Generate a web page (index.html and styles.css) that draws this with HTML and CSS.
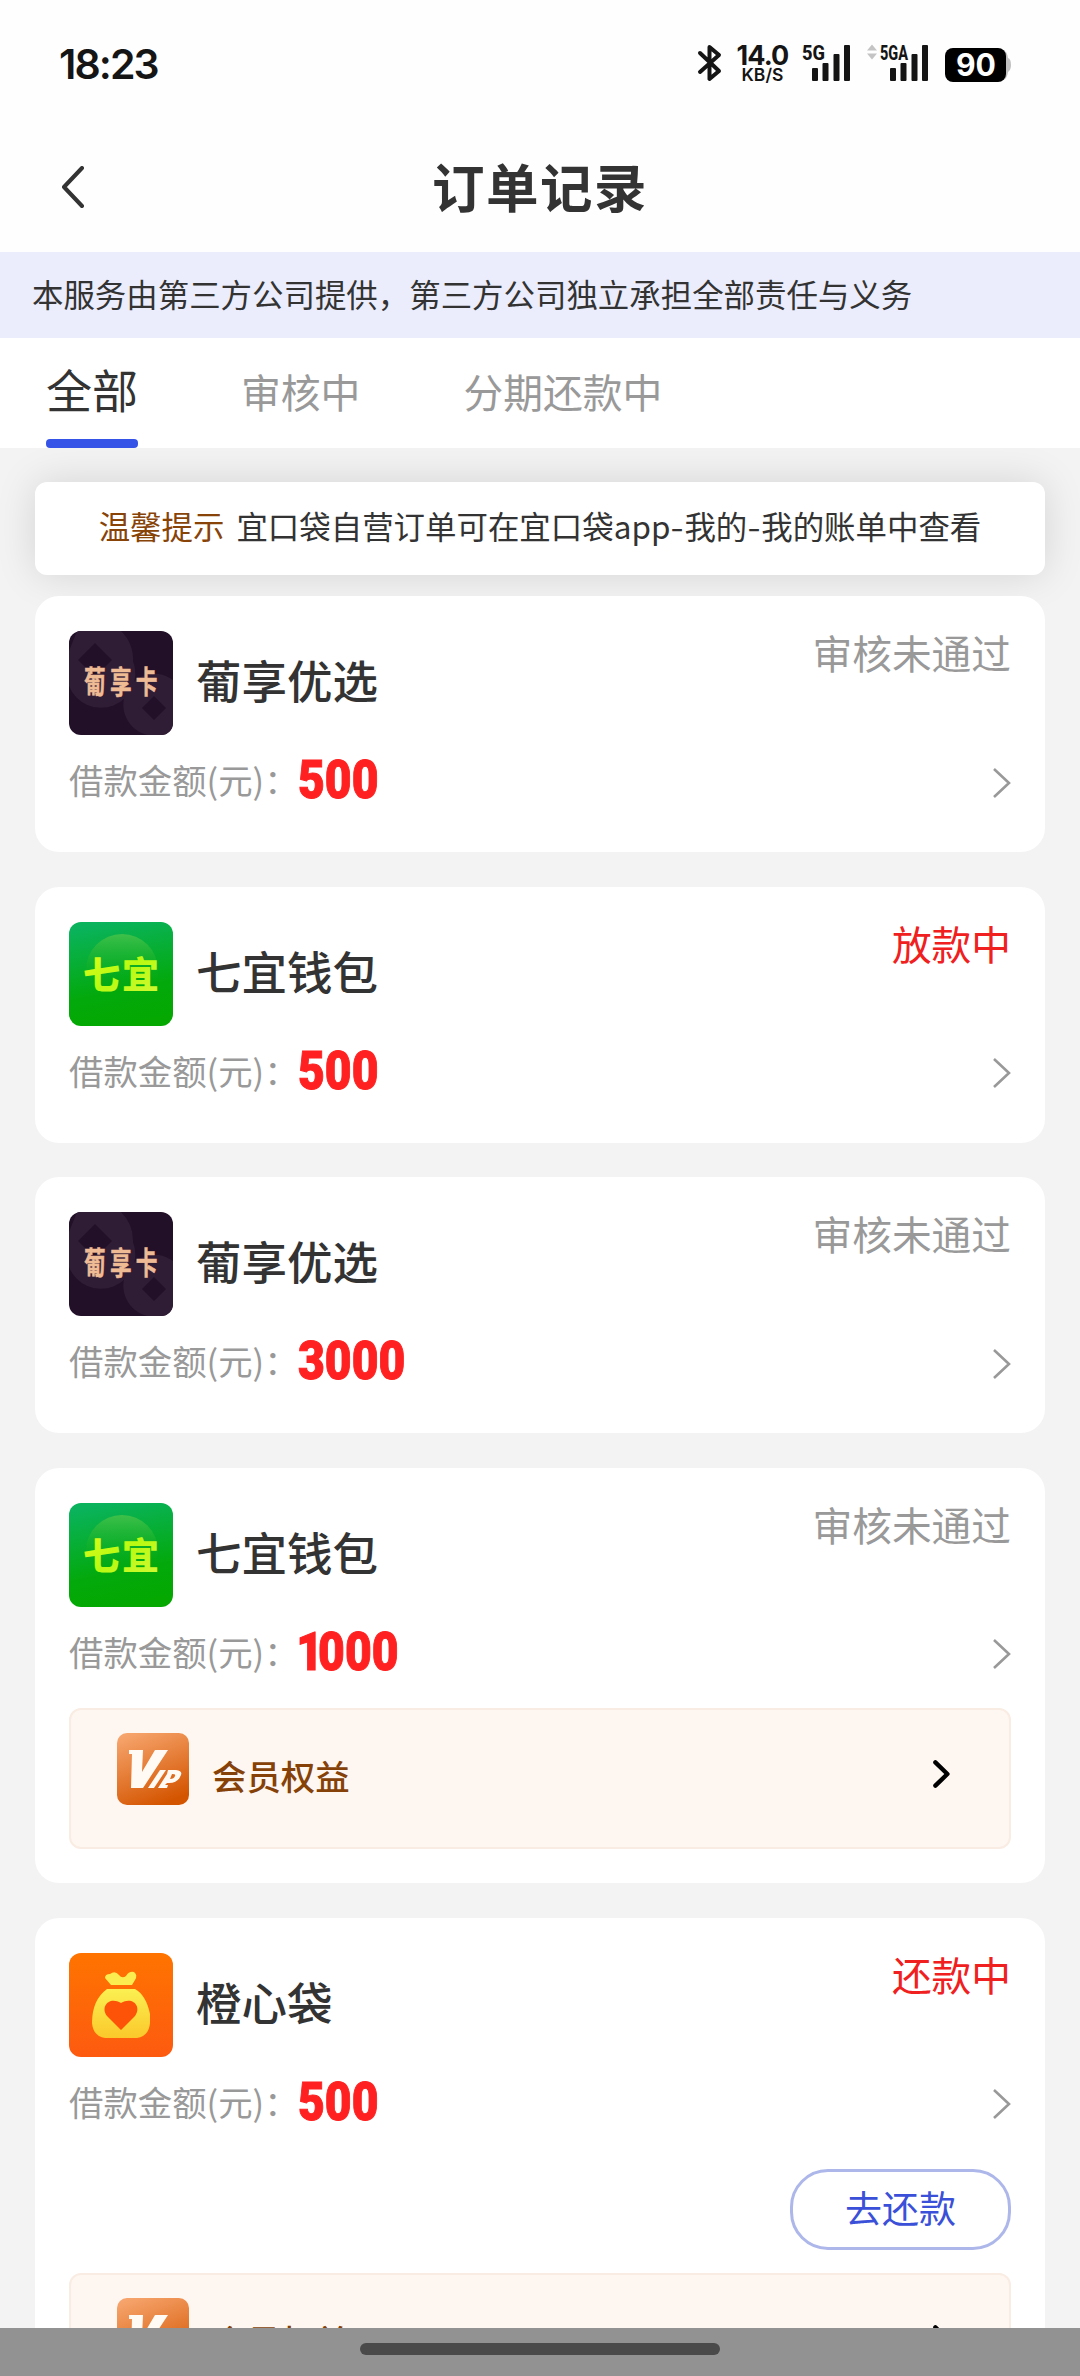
FILE: index.html
```html
<!DOCTYPE html>
<html lang="zh-CN">
<head>
<meta charset="utf-8">
<title>订单记录</title>
<link rel="stylesheet" href="styles.css">
</head>
<body>
<svg class="defs" width="0" height="0" aria-hidden="true">
  <defs>
    <linearGradient id="green" x1="0.4" y1="0" x2="0.6" y2="1"><stop offset="0" stop-color="#0ab35c"/><stop offset="0.65" stop-color="#03a90c"/><stop offset="1" stop-color="#04a800"/></linearGradient>
    <linearGradient id="dome" x1="0" y1="0" x2="0" y2="1"><stop offset="0" stop-color="#3fc04a"/><stop offset="0.7" stop-color="#06aa10" stop-opacity="0"/></linearGradient>
    <linearGradient id="lime" x1="0" y1="0" x2="1" y2="1"><stop offset="0" stop-color="#e2fb1c"/><stop offset="0.5" stop-color="#b9fa12"/><stop offset="1" stop-color="#d5f83a"/></linearGradient>
    <linearGradient id="orange" x1="0" y1="0" x2="0" y2="1"><stop offset="0" stop-color="#ff7400"/><stop offset="1" stop-color="#fd5a10"/></linearGradient>
    <linearGradient id="gold" x1="0" y1="0" x2="0" y2="1"><stop offset="0" stop-color="#fbf052"/><stop offset="1" stop-color="#fbc82a"/></linearGradient>
    <linearGradient id="vipbg" x1="0.2" y1="0" x2="0.6" y2="1"><stop offset="0" stop-color="#f6a46c"/><stop offset="1" stop-color="#d45500"/></linearGradient>
  </defs>
  <symbol id="logo-pu" viewBox="0 0 104 104">
    <rect width="104" height="104" fill="#220f28"/>
    <path fill="#2f1c35" fill-rule="evenodd" d="M8 0H52A40 40 0 0 1 64 30A34 34 0 0 1 0 55V20ZM26 12L9 29L26 46L43 29Z"/>
    <path fill="#2f1c35" fill-rule="evenodd" d="M104 49A31 31 0 1 0 92 104H104ZM85 65L73 77L85 89L97 77Z"/>
  </symbol>
  <symbol id="logo-qi" viewBox="0 0 104 104">
    <rect width="104" height="104" fill="url(#green)"/>
    <circle cx="53" cy="48" r="36" fill="url(#dome)"/>
  </symbol>
  <symbol id="logo-bag" viewBox="0 0 104 104">
    <rect width="104" height="104" fill="url(#orange)"/>
    <path fill="#fbec50" d="M42 32L36 25Q36 21 41 21Q46 17 50 22Q53 26 57 23Q60 18 65 19Q69 22 66 27L63 32Z"/>
    <path fill="url(#gold)" d="M38 36H66Q77 42 81 61V70Q80 83 68 85H36Q24 83 23 70Q23 47 38 36Z"/>
    <path fill="#fd5308" d="M52 77L38 63C31 54 40 43 52 50C64 43 73 54 66 63Z"/>
  </symbol>
  <symbol id="vip" viewBox="0 0 72 72">
    <rect width="72" height="72" rx="10" fill="url(#vipbg)"/>
    <path fill="#fffaf4" d="M12 17H26L25 39L38 17H51L26 55H14L15 21H12Z"/>
    <path fill="#fffaf4" d="M43 37H49L37 55H31ZM51 37H59Q67 38 63 44Q60 50 52 50H50L48 52H51L50 55H41L50 41ZM55 41L53 46Q57 46 58 43Q59 41 55 41Z" fill-rule="evenodd"/>
  </symbol>
  <symbol id="more" viewBox="0 0 18 30"><path d="M1 1L16 15L1 29" fill="none" stroke="#999" stroke-width="2.6"/></symbol>
  <symbol id="go" viewBox="0 0 17 28"><path d="M2.4 2.4L14.4 14L2.4 25.6" fill="none" stroke="#000" stroke-width="4.4" stroke-linecap="round" stroke-linejoin="round"/></symbol>
  <symbol id="bars" viewBox="0 0 38 36"><path fill="#151515" d="M0 24q0-1 1-1h4q1 0 1 1v11q0 1-1 1h-4q-1 0-1-1zM10.500 19q0-1 1-1h4q1 0 1 1v16q0 1-1 1h-4q-1 0-1-1zM21.500 10q0-1 1-1h4q1 0 1 1v25q0 1-1 1h-4q-1 0-1-1zM32 1q0-1 1-1h4q1 0 1 1v34q0 1-1 1h-4q-1 0-1-1z"/></symbol>
</svg>

<div class="screen">
  <header class="status-bar">
    <span class="clock">18:23</span>
    <div class="indicators">
      <svg class="bt" width="24" height="38" viewBox="0 0 24 38"><path d="M2 9L21 27L11.500 35V3L21 11L2 28" fill="none" stroke="#151515" stroke-width="4" stroke-linejoin="round" stroke-linecap="round"/></svg>
      <div class="speed"><span class="rate">14.0</span><span class="unit">KB/S</span></div>
      <svg class="sig" width="49" height="38" viewBox="0 0 49 38"><text class="net" x="0" y="16" font-size="21" textLength="23" lengthAdjust="spacingAndGlyphs">5G</text><use href="#bars" x="10" y="1" width="38" height="36"/></svg>
      <svg class="sig" width="62" height="38" viewBox="0 0 62 38"><path fill="#c4c4c4" d="M0 6.500L5 0.500L10 6.500ZM0 9.500H10L5 15.500Z"/><text class="net" x="13" y="16" font-size="21" textLength="28" lengthAdjust="spacingAndGlyphs">5GA</text><use href="#bars" x="23" y="1" width="38" height="36"/></svg>
      <svg class="battery" width="67" height="34" viewBox="0 0 67 34"><path fill="#c0c0c0" d="M58 2Q62 3 63 10Q66 11 66 17Q66 22 63 24Q62 31 58 32Z"/><rect width="61" height="34" rx="8"/><text class="level" x="11" y="28" font-size="31" textLength="40" lengthAdjust="spacingAndGlyphs">90</text></svg>
    </div>
  </header>

  <nav class="title-bar">
    <svg class="back" width="24" height="42" viewBox="0 0 24 42"><path d="M21 2L3 21L21 40" fill="none" stroke="#333" stroke-width="4" stroke-linecap="round" stroke-linejoin="round"/></svg>
    <h1>订单记录</h1>
  </nav>

  <p class="notice">本服务由第三方公司提供，第三方公司独立承担全部责任与义务</p>

  <div class="tabs">
    <span class="tab active">全部</span>
    <span class="tab">审核中</span>
    <span class="tab">分期还款中</span>
  </div>

  <main class="list">
    <div class="tip"><span class="tip-label">温馨提示</span><span>宜口袋自营订单可在宜口袋app<i class="dash">-</i>我的<i class="dash">-</i>我的账单中查看</span></div>

    <section class="card">
      <div class="head"><svg class="logo" viewBox="0 0 104 104"><use href="#logo-pu"/><text class="pu" transform="translate(15 62) scale(0.7 1)">葡享卡</text></svg><h2>葡享优选</h2><span class="state">审核未通过</span></div>
      <div class="sum"><span class="label">借款金额(元)：</span><span class="amount">500</span><svg class="more"><use href="#more"/></svg></div>
    </section>

    <section class="card">
      <div class="head"><svg class="logo" viewBox="0 0 104 104"><use href="#logo-qi"/><text class="qi" x="14" y="67">七宜</text></svg><h2>七宜钱包</h2><span class="state hot">放款中</span></div>
      <div class="sum"><span class="label">借款金额(元)：</span><span class="amount">500</span><svg class="more"><use href="#more"/></svg></div>
    </section>

    <section class="card">
      <div class="head"><svg class="logo" viewBox="0 0 104 104"><use href="#logo-pu"/><text class="pu" transform="translate(15 62) scale(0.7 1)">葡享卡</text></svg><h2>葡享优选</h2><span class="state">审核未通过</span></div>
      <div class="sum"><span class="label">借款金额(元)：</span><span class="amount">3000</span><svg class="more"><use href="#more"/></svg></div>
    </section>

    <section class="card">
      <div class="head"><svg class="logo" viewBox="0 0 104 104"><use href="#logo-qi"/><text class="qi" x="14" y="67">七宜</text></svg><h2>七宜钱包</h2><span class="state">审核未通过</span></div>
      <div class="sum"><span class="label">借款金额(元)：</span><span class="amount"><span class="one">1</span>000</span><svg class="more"><use href="#more"/></svg></div>
      <div class="member"><svg class="vip"><use href="#vip"/></svg><span>会员权益</span><svg class="go"><use href="#go"/></svg></div>
    </section>

    <section class="card">
      <div class="head"><svg class="logo" viewBox="0 0 104 104"><use href="#logo-bag"/></svg><h2>橙心袋</h2><span class="state hot">还款中</span></div>
      <div class="sum"><span class="label">借款金额(元)：</span><span class="amount">500</span><svg class="more"><use href="#more"/></svg></div>
      <div class="actions"><span class="repay">去还款</span></div>
      <div class="member"><svg class="vip"><use href="#vip"/></svg><span>会员权益</span><svg class="go"><use href="#go"/></svg></div>
    </section>
  </main>

  <footer class="gesture"><span class="pill"></span></footer>
</div>
</body>
</html>
```

FILE: styles.css
```css
* { box-sizing: border-box; }
body {
  margin: 0;
  font-family: "Noto Sans CJK SC", sans-serif;
  color: #333;
}
h1, h2, p { margin: 0; }
svg { flex: none; display: block; }
.defs { position: absolute; }

.screen {
  width: 1080px;
  height: 2376px;
  display: flex;
  flex-direction: column;
  overflow: hidden;
  background: #f3f3f3;
}

.status-bar {
  flex: none;
  height: 126px;
  display: flex;
  justify-content: space-between;
  align-items: flex-start;
  padding: 44px 68px 0 59px;
  background: #fefefe;
}
.clock {
  font: 600 41px/41px Inter, sans-serif;
  letter-spacing: -1.9px;
  color: #151515;
}
.indicators { display: flex; align-items: flex-start; }
.indicators svg { overflow: visible; }
.bt { margin-right: 14px; }
.speed {
  width: 53px;
  display: flex;
  flex-direction: column;
  align-items: center;
  margin-right: 13px;
  color: #151515;
}
.rate { font: 700 27px/23px Inter, sans-serif; letter-spacing: -0.9px; white-space: nowrap; }
.unit { font: 600 17.500px/15px Inter, sans-serif; white-space: nowrap; }
.sig { margin-right: 16px; }
.net { font-family: Roboto, sans-serif; font-weight: 800; fill: #151515; }
.battery { margin-top: 4px; }
.level { font-family: Inter, sans-serif; font-weight: 700; fill: #fff; }

.title-bar {
  flex: none;
  height: 126px;
  display: grid;
  grid-template-columns: 85px 1fr 85px;
  align-items: center;
  background: #fefefe;
  padding-bottom: 5px;
}
.back { justify-self: end; }
h1 {
  text-align: center;
  font-size: 52.500px;
  font-weight: 700;
  letter-spacing: 1.500px;
  line-height: 70px;
  padding-bottom: 3px;
}

.notice {
  flex: none;
  height: 86px;
  padding-left: 32px;
  background: #ebedfc;
  font-size: 31.450px;
  line-height: 84px;
  white-space: nowrap;
}

.tabs {
  flex: none;
  height: 110px;
  display: flex;
  gap: 103px;
  padding-left: 46px;
  background: #fff;
}
.tab {
  font-size: 39.800px;
  line-height: 106px;
  color: #999;
}
.tab.active {
  position: relative;
  font-size: 46px;
  line-height: 100px;
  color: #333;
}
.tab.active::after {
  content: "";
  position: absolute;
  left: 0;
  right: 0;
  bottom: 0;
  height: 9px;
  border-radius: 4px;
  background: #3653e8;
}

.list {
  flex: 1;
  min-height: 0;
  overflow: hidden;
  display: flex;
  flex-direction: column;
  padding: 34px 35px 0;
}
.tip {
  flex: none;
  height: 93px;
  margin-bottom: 21px;
  display: flex;
  justify-content: center;
  gap: 12px;
  border-radius: 12px;
  background: #fff;
  box-shadow: 0 0 40px rgba(0, 0, 0, 0.13);
  font-size: 31.450px;
  line-height: 88px;
  white-space: nowrap;
}
.tip-label { color: #874308; }
.dash {
  display: inline-block;
  width: 14px;
  font-style: normal;
  text-align: center;
  transform: scaleX(1.2);
}

.card {
  flex: none;
  min-height: 256px;
  margin-bottom: 34.670px;
  padding: 35px 34px 30px;
  border-radius: 24px;
  background: #fff;
}
.head { display: flex; height: 104px; }
.logo { width: 104px; height: 104px; border-radius: 12px; }
.pu {
  font-family: "Noto Sans CJK SC", sans-serif;
  font-size: 31px;
  font-weight: 700;
  letter-spacing: 6px;
  fill: #eebb95;
  stroke: #eebb95;
  stroke-width: 0.5px;
}
.qi {
  font-family: "Noto Sans CJK SC", sans-serif;
  font-size: 37px;
  font-weight: 900;
  letter-spacing: 2px;
  fill: url(#lime);
}
h2 {
  flex: 1;
  margin-left: 23px;
  font-size: 45.500px;
  font-weight: 500;
  line-height: 96px;
}
.state {
  font-size: 39.700px;
  line-height: 42px;
  color: #999;
}
.state.hot { color: #f02020; }

.sum {
  display: flex;
  align-items: center;
  height: 82px;
  margin-top: 5px;
}
.label { width: 229px; padding-bottom: 4px; font-size: 34.400px; line-height: 50px; color: #999; white-space: nowrap; }
.amount {
  flex: 1;
  padding-bottom: 4px;
  font: 900 54.500px/60px Roboto, sans-serif;
  color: #ff2121;
  -webkit-text-stroke: 1px #ff2121;
  transform: scaleX(0.85);
  transform-origin: 0 50%;
}
.one { margin: 0 -6px 0 -2px; }
.more { width: 18px; height: 30px; margin-top: 3px; }

.member {
  display: flex;
  height: 141px;
  margin: 14px 0 4px;
  padding: 23px 59px 0 46px;
  border: 2px solid #f9ece3;
  border-radius: 12px;
  background: #fef7f1;
}
.vip { width: 72px; height: 72px; }
.member span {
  flex: 1;
  margin-left: 23px;
  font-size: 34.400px;
  font-weight: 500;
  line-height: 84px;
  color: #854108;
}
.go { width: 17px; height: 28px; margin-top: 27px; }

.actions { display: flex; justify-content: flex-end; height: 115px; padding-top: 25px; }
.repay {
  flex: none;
  width: 221px;
  height: 81px;
  border: 3px solid #adb7ea;
  border-radius: 38px;
  text-align: center;
  font-size: 37px;
  line-height: 71px;
  color: #3b50d8;
}

.gesture {
  flex: none;
  height: 48px;
  display: flex;
  justify-content: center;
  padding-top: 15px;
  background: #929292;
}
.pill { width: 360px; height: 12px; border-radius: 6px; background: #4a4a4a; }
```
